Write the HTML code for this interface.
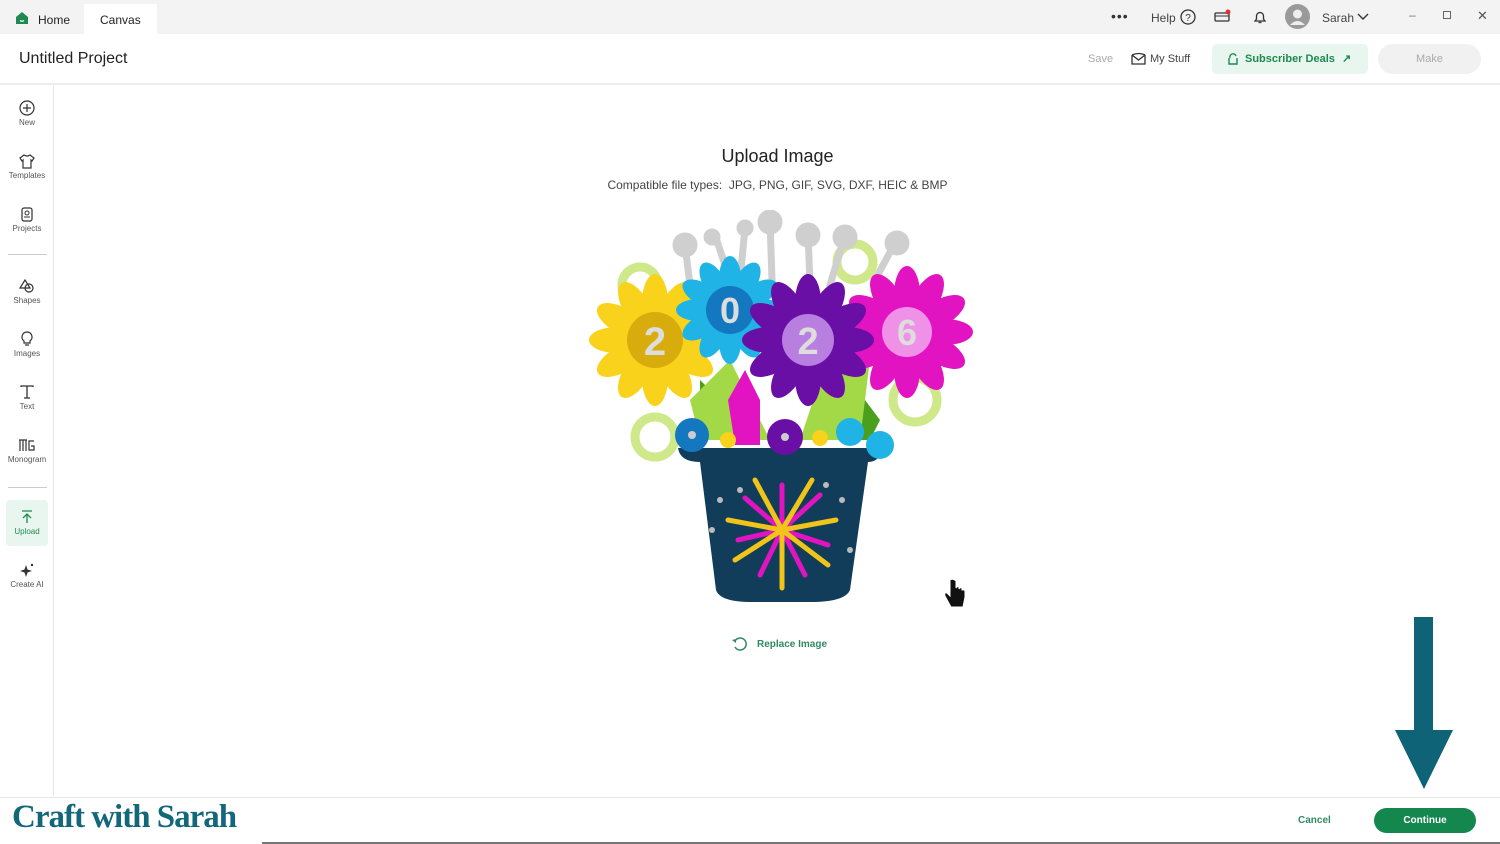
<!DOCTYPE html>
<html><head><meta charset="utf-8">
<style>
*{margin:0;padding:0;box-sizing:border-box}
body{width:1500px;height:844px;overflow:hidden;background:#fff;font-family:"Liberation Sans",sans-serif;position:relative;color:#222}
.abs{position:absolute}
.top{left:0;top:0;width:1500px;height:34px;background:#f3f3f3}
.tab{font-size:12px;color:#222}
.hdr{left:0;top:34px;width:1500px;height:51px;background:#fff;border-bottom:2px solid #ececec}
.side{left:0;top:86px;width:54px;height:710px;border-right:1px solid #e6e6e6;background:#fff}
.si{position:absolute;left:0;width:54px;text-align:center;font-size:8px;color:#555}
.si svg{display:block;margin:0 auto 2px}
.foot{left:0;top:797px;width:1500px;height:47px;border-top:1px solid #e4e4e4;background:#fff}
</style></head><body>
<div class="abs top"></div>
<div class="abs" style="left:84px;top:4px;width:73px;height:30px;background:#fff"></div>
<svg class="abs" style="left:15px;top:11px" width="14" height="14" viewBox="0 0 14 14"><path d="M1 6 L7 1 L13 6 V13 H1Z" fill="#1e8a4f"/><path d="M5 9.5 Q7 11 9 9.5" stroke="#fff" stroke-width="1.2" fill="none"/></svg>
<div class="abs tab" style="left:38px;top:13px">Home</div>
<div class="abs tab" style="left:100px;top:13px">Canvas</div>
<div class="abs" style="left:1111px;top:8px;font-size:14px;letter-spacing:1px;color:#333">•••</div>
<div class="abs" style="left:1151px;top:11px;font-size:12px;color:#444">Help</div>
<svg class="abs" style="left:1180px;top:9px" width="16" height="16"><circle cx="8" cy="8" r="7" fill="none" stroke="#333" stroke-width="1.3"/><text x="8" y="12" font-size="10" text-anchor="middle" fill="#333" font-family="Liberation Sans">?</text></svg>
<svg class="abs" style="left:1214px;top:9px" width="18" height="14"><rect x="1" y="4" width="14" height="8" rx="1" fill="none" stroke="#333" stroke-width="1.3"/><line x1="1" y1="7" x2="15" y2="7" stroke="#333"/><circle cx="14" cy="3" r="2.5" fill="#d33"/></svg>
<svg class="abs" style="left:1252px;top:9px" width="16" height="16"><path d="M3 12 H13 L11.5 10 V7 A3.5 3.5 0 0 0 4.5 7 V10Z M6.5 13.5 H9.5" fill="none" stroke="#333" stroke-width="1.3"/></svg>
<svg class="abs" style="left:1285px;top:4px" width="25" height="25"><circle cx="12.5" cy="12.5" r="12.5" fill="#9a9a9a"/><circle cx="12.5" cy="10" r="4.5" fill="#eee"/><path d="M5 21 Q12.5 13 20 21" fill="#eee"/></svg>
<div class="abs" style="left:1322px;top:11px;font-size:12px;color:#444">Sarah</div>
<svg class="abs" style="left:1357px;top:13px" width="12" height="8"><path d="M1 1 L6 6 L11 1" fill="none" stroke="#333" stroke-width="1.4"/></svg>
<div class="abs" style="left:1409px;top:8px;font-size:12px;color:#777">–</div>
<div class="abs" style="left:1443px;top:11px;width:8px;height:8px;border:1px solid #666"></div>
<div class="abs" style="left:1477px;top:8px;font-size:13px;color:#555">✕</div>

<div class="abs hdr"></div>
<div class="abs" style="left:19px;top:50px;font-size:16px;color:#222">Untitled Project</div>
<div class="abs" style="left:1088px;top:53px;font-size:11px;color:#aaa">Save</div>
<svg class="abs" style="left:1131px;top:52px" width="15" height="13"><path d="M1 3 V12 H14 V3 M1 3 L7.5 8 L14 3 M1 3 Q7.5 0 14 3" fill="none" stroke="#333" stroke-width="1.3"/></svg>
<div class="abs" style="left:1150px;top:53px;font-size:11px;color:#444">My Stuff</div>
<div class="abs" style="left:1212px;top:44px;width:156px;height:30px;background:#e9f6ef;border-radius:5px"></div>
<svg class="abs" style="left:1227px;top:52px" width="12" height="14"><path d="M2 6 V12 H10 V6 M3 6 A3 3 0 0 1 9 4" fill="none" stroke="#1e8a4f" stroke-width="1.4"/></svg>
<div class="abs" style="left:1245px;top:53px;font-size:11px;font-weight:bold;color:#1e8a4f">Subscriber Deals</div>
<div class="abs" style="left:1342px;top:52px;font-size:11px;font-weight:bold;color:#1e8a4f">↗</div>
<div class="abs" style="left:1378px;top:44px;width:103px;height:30px;background:#f1f1f1;border-radius:15px;text-align:center;line-height:30px;font-size:11px;color:#aaa">Make</div>

<div class="abs side">
 <div class="si" style="top:14px"><svg width="16" height="16"><circle cx="8" cy="8" r="7" fill="none" stroke="#333" stroke-width="1.2"/><path d="M8 4V12M4 8H12" stroke="#333" stroke-width="1.2"/></svg>New</div>
 <div class="si" style="top:67px"><svg width="16" height="16"><path d="M5 2 L1 5 L3 8 L4 7 V15 H12 V7 L13 8 L15 5 L11 2 Q8 4 5 2Z" fill="none" stroke="#333" stroke-width="1.2"/></svg>Templates</div>
 <div class="si" style="top:120px"><svg width="16" height="16"><rect x="3" y="2" width="10" height="13" rx="2" fill="none" stroke="#333" stroke-width="1.2"/><circle cx="8" cy="7" r="2" fill="none" stroke="#333"/><line x1="5" y1="11" x2="11" y2="11" stroke="#333"/></svg>Projects</div>
 <div class="abs" style="left:8px;top:168px;width:39px;height:1px;background:#ccc"></div>
 <div class="si" style="top:192px"><svg width="16" height="16"><path d="M6 2 L1 10 H11Z" fill="none" stroke="#333" stroke-width="1.2"/><circle cx="10" cy="10" r="4" fill="none" stroke="#333" stroke-width="1.2"/></svg>Shapes</div>
 <div class="si" style="top:245px"><svg width="16" height="16"><path d="M8 1 A5 5 0 0 0 5 10 V12 H11 V10 A5 5 0 0 0 8 1Z M6 14H10" fill="none" stroke="#333" stroke-width="1.2"/></svg>Images</div>
 <div class="si" style="top:298px"><svg width="16" height="16"><path d="M2 3V2H14V3M8 2V14M5 14H11" fill="none" stroke="#333" stroke-width="1.3"/></svg>Text</div>
 <div class="si" style="top:351px"><svg width="18" height="16"><path d="M1 3H9M2 3V14M5 3V14M8 3V14M16 4H11V13H16V9H13" fill="none" stroke="#333" stroke-width="1.2"/></svg>Monogram</div>
 <div class="abs" style="left:8px;top:401px;width:39px;height:1px;background:#ccc"></div>
 <div style="position:absolute;left:6px;top:414px;width:42px;height:46px;background:#e9f6ef;border-radius:4px"></div>
 <div class="si" style="top:423px;color:#1e8a4f"><svg width="16" height="16"><path d="M3 2H13M8 14V5M4 9L8 5L12 9" fill="none" stroke="#1e8a4f" stroke-width="1.3"/></svg>Upload</div>
 <div class="si" style="top:476px"><svg width="16" height="16"><path d="M7 3 L8.5 7.5 L13 9 L8.5 10.5 L7 15 L5.5 10.5 L1 9 L5.5 7.5Z" fill="#333"/><circle cx="13" cy="3" r="1.2" fill="#333"/></svg>Create AI</div>
</div>

<div class="abs" style="left:0;top:146px;width:1555px;text-align:center;font-size:18px;color:#222">Upload Image</div>
<div class="abs" style="left:0;top:178px;width:1555px;text-align:center;font-size:12px;color:#444">Compatible file types:&nbsp; JPG, PNG, GIF, SVG, DXF, HEIC &amp; BMP</div>

<svg class="abs" style="left:580px;top:210px" width="400" height="400" viewBox="580 210 400 400">
<defs>
<ellipse id="p" cx="0" cy="-38" rx="13" ry="28"/>
<ellipse id="q" cx="0" cy="-32" rx="11" ry="22"/>
</defs>
<g fill="none" stroke="#cfe88a" stroke-width="9">
<circle cx="640" cy="285" r="18"/><circle cx="655" cy="437" r="20"/><circle cx="915" cy="400" r="22"/><circle cx="855" cy="262" r="18"/>
</g>
<g stroke="#cfcfcf" stroke-width="7" stroke-linecap="round" fill="#cfcfcf">
<path d="M690 285 L685 245"/><path d="M730 280 L715 235"/><path d="M740 280 L745 228"/><path d="M772 280 L770 220"/><path d="M810 285 L808 232"/><path d="M830 285 L845 235"/><path d="M875 280 L895 243"/>
<circle cx="685" cy="245" r="9"/><circle cx="770" cy="222" r="9"/><circle cx="808" cy="235" r="9"/><circle cx="845" cy="237" r="9"/><circle cx="897" cy="243" r="9"/><circle cx="712" cy="237" r="5"/><circle cx="745" cy="228" r="5"/>
</g>
<g fill="#4a9f1c"><path d="M700 380 L760 440 L800 440 L850 380 L880 420 L870 440 L700 440Z"/></g>
<g fill="#a3d946"><path d="M690 400 L730 360 L770 440 L700 440Z M820 380 L870 360 L860 440 L800 440Z"/></g>
<g fill="#f9d21b" transform="translate(655,340)"><use href="#p"/><use href="#p" transform="rotate(30)"/><use href="#p" transform="rotate(60)"/><use href="#p" transform="rotate(90)"/><use href="#p" transform="rotate(120)"/><use href="#p" transform="rotate(150)"/><use href="#p" transform="rotate(180)"/><use href="#p" transform="rotate(210)"/><use href="#p" transform="rotate(240)"/><use href="#p" transform="rotate(270)"/><use href="#p" transform="rotate(300)"/><use href="#p" transform="rotate(330)"/><circle r="28" fill="#d9ac0e"/><text y="15" font-size="40" font-weight="bold" text-anchor="middle" fill="#ddd" font-family="Liberation Sans">2</text></g>
<g fill="#20b3e6" transform="translate(730,310)"><use href="#q"/><use href="#q" transform="rotate(30)"/><use href="#q" transform="rotate(60)"/><use href="#q" transform="rotate(90)"/><use href="#q" transform="rotate(120)"/><use href="#q" transform="rotate(150)"/><use href="#q" transform="rotate(180)"/><use href="#q" transform="rotate(210)"/><use href="#q" transform="rotate(240)"/><use href="#q" transform="rotate(270)"/><use href="#q" transform="rotate(300)"/><use href="#q" transform="rotate(330)"/><circle r="24" fill="#1478c0"/><text y="13" font-size="36" font-weight="bold" text-anchor="middle" fill="#ddd" font-family="Liberation Sans">0</text></g>
<g fill="#e214c1" transform="translate(907,332)"><use href="#p"/><use href="#p" transform="rotate(30)"/><use href="#p" transform="rotate(60)"/><use href="#p" transform="rotate(90)"/><use href="#p" transform="rotate(120)"/><use href="#p" transform="rotate(150)"/><use href="#p" transform="rotate(180)"/><use href="#p" transform="rotate(210)"/><use href="#p" transform="rotate(240)"/><use href="#p" transform="rotate(270)"/><use href="#p" transform="rotate(300)"/><use href="#p" transform="rotate(330)"/><circle r="25" fill="#f091e8"/><text y="13" font-size="36" font-weight="bold" text-anchor="middle" fill="#ddd" font-family="Liberation Sans">6</text></g>
<g fill="#6a0fa6" transform="translate(808,340)"><use href="#p"/><use href="#p" transform="rotate(30)"/><use href="#p" transform="rotate(60)"/><use href="#p" transform="rotate(90)"/><use href="#p" transform="rotate(120)"/><use href="#p" transform="rotate(150)"/><use href="#p" transform="rotate(180)"/><use href="#p" transform="rotate(210)"/><use href="#p" transform="rotate(240)"/><use href="#p" transform="rotate(270)"/><use href="#p" transform="rotate(300)"/><use href="#p" transform="rotate(330)"/><circle r="26" fill="#b87ee0"/><text y="14" font-size="38" font-weight="bold" text-anchor="middle" fill="#ddd" font-family="Liberation Sans">2</text></g>
<path d="M728 400 L745 370 L760 400 L760 445 L735 445Z" fill="#e214c1"/>
<path d="M678 448 L882 448 Q880 462 868 462 L850 590 Q845 602 810 602 L752 602 Q720 602 716 590 L700 462 Q680 462 678 448Z" fill="#123d5a"/>
<g stroke-width="5" stroke-linecap="round"><g stroke="#e214c1"><path d="M782 530 L745 498"/><path d="M782 530 L820 495"/><path d="M782 530 L738 540"/><path d="M782 530 L828 545"/><path d="M782 530 L760 575"/><path d="M782 530 L805 575"/><path d="M782 530 L782 485"/></g><g stroke="#f0c419"><path d="M782 530 L755 480"/><path d="M782 530 L812 480"/><path d="M782 530 L728 520"/><path d="M782 530 L836 520"/><path d="M782 530 L735 560"/><path d="M782 530 L828 565"/><path d="M782 530 L782 588"/></g></g>
<g fill="#bbb"><circle cx="720" cy="500" r="3"/><circle cx="842" cy="500" r="3"/><circle cx="712" cy="530" r="3"/><circle cx="850" cy="550" r="3"/><circle cx="740" cy="490" r="3"/><circle cx="826" cy="485" r="3"/></g>
<g fill="#1478c0"><circle cx="692" cy="435" r="17"/></g><circle cx="692" cy="435" r="4" fill="#ccc"/>
<g fill="#20b3e6"><circle cx="850" cy="432" r="14"/><circle cx="880" cy="445" r="14"/></g>
<g fill="#6a0fa6"><circle cx="785" cy="437" r="18"/></g><circle cx="785" cy="437" r="4" fill="#ccc"/>
<g fill="#f9d21b"><circle cx="728" cy="440" r="8"/><circle cx="820" cy="438" r="8"/></g>
</svg>
<svg class="abs" style="left:942px;top:578px" width="26" height="34"><path d="M8 2 V18 L5 15 Q2 14 3 18 L9 29 H21 L23 19 V13 Q22 11 20 12 V10 Q18 9 17 11 V9 Q15 8 14 10 V3 Q11 0 8 2Z" fill="#111" stroke="#fff" stroke-width="1"/></svg>

<svg class="abs" style="left:731px;top:636px" width="18" height="16"><path d="M4 5 A6 6 0 1 1 4 11" fill="none" stroke="#2f8a61" stroke-width="1.5"/><path d="M1 4 L5 3 L5 7Z" fill="#2f8a61"/></svg>
<div class="abs" style="left:757px;top:639px;font-size:10px;font-weight:bold;color:#2f8a61">Replace Image</div>

<div class="abs" style="left:1414px;top:617px;width:19px;height:114px;background:#0e6377"></div>
<svg class="abs" style="left:1395px;top:730px" width="58" height="59"><path d="M0 0 H58 L29 59Z" fill="#0e6377"/></svg>

<div class="abs foot"></div>
<div class="abs" style="left:12px;top:799px;font-family:'Liberation Serif',serif;font-size:33px;font-weight:bold;color:#12677a;letter-spacing:-1px">Craft with Sarah</div>
<div class="abs" style="left:1298px;top:815px;font-size:10px;font-weight:bold;color:#2f8a61">Cancel</div>
<div class="abs" style="left:1374px;top:808px;width:102px;height:25px;background:#14874f;border-radius:13px;text-align:center;line-height:25px;font-size:10px;font-weight:bold;color:#fff">Continue</div>
<div class="abs" style="left:262px;top:842px;width:1238px;height:2px;background:#777"></div>
</body></html>
